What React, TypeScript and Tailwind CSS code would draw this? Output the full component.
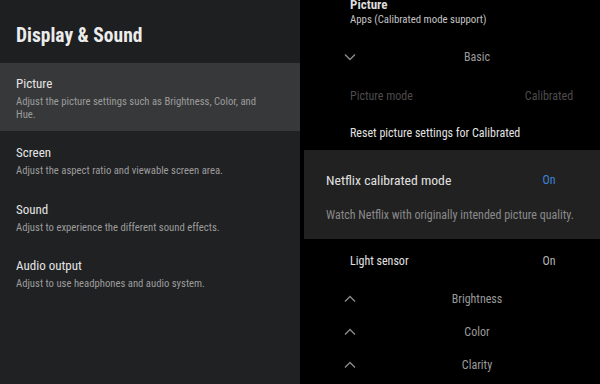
import React from "react"

const font = { fontFamily: "'Roboto Condensed', Roboto, 'Liberation Sans', sans-serif" }

const menu = [
  { title: "Picture", desc: "Adjust the picture settings such as Brightness, Color, and Hue.", active: true },
  { title: "Screen", desc: "Adjust the aspect ratio and viewable screen area." },
  { title: "Sound", desc: "Adjust to experience the different sound effects." },
  { title: "Audio output", desc: "Adjust to use headphones and audio system." },
]

function Chevron({ up }: { up?: boolean }) {
  return (
    <svg width="12" height="8" viewBox="0 0 12 8" fill="none">
      <polyline
        points={up ? "1,6.5 6,1.5 11,6.5" : "1,1.5 6,6.5 11,1.5"}
        stroke="#8a8a8a"
        strokeWidth="1.4"
      />
    </svg>
  )
}

export default function App() {
  return (
    <div className="flex w-[600px] h-[384px] overflow-hidden bg-black" style={font}>
      {/* left menu */}
      <div className="w-[300px] h-full bg-[#202123] flex flex-col">
        <div className="h-[63px] flex items-center pl-4 pt-[9px] bg-[#1e1f20]">
          <h1 className="text-[19.5px] font-bold text-[#ececec] leading-none">Display &amp; Sound</h1>
        </div>
        {menu.map((m) =>
          m.active ? (
            <div key={m.title} className="bg-[#373839] h-[68px] pl-4 pr-8 pt-[13px]">
              <div className="text-[13px] leading-[16px] text-[#e4e4e4]">{m.title}</div>
              <div className="text-[10.7px] leading-[13px] text-[#9c9c9c] mt-[3px]">{m.desc}</div>
            </div>
          ) : (
            <div key={m.title} className="h-[56.5px] pl-4 pt-[14px]">
              <div className="text-[13px] leading-[16px] text-[#e4e4e4]">{m.title}</div>
              <div className="text-[10.7px] leading-[13px] text-[#9c9c9c] mt-[3px]">{m.desc}</div>
            </div>
          )
        )}
      </div>

      {/* right detail */}
      <div className="flex-1 h-full flex flex-col">
        <div className="pl-[50px] mt-[-3px]">
          <div className="text-[13px] leading-[16px] font-bold text-[#dcdcdc]">Picture</div>
          <div className="text-[10.8px] leading-[14px] text-[#c4c4c4]">Apps (Calibrated mode support)</div>
        </div>
        <div className="h-[11px]" />
        <div className="h-[38px] flex items-center pl-[40px] pr-[6px]">
          <div className="w-[20px] flex justify-center"><Chevron /></div>
          <div className="flex-1 text-center text-[12px] text-[#9a9a9a]">Basic</div>
        </div>
        <div className="h-[39px] flex items-center pl-[50px]">
          <div className="flex-1 text-[12px] text-[#4c4c4c]">Picture mode</div>
          <div className="w-[80px] mr-[11px] text-center text-[12px] text-[#4c4c4c]">Calibrated</div>
        </div>
        <div className="h-[35px] flex items-center pl-[50px]">
          <div className="text-[12px] text-[#e2e2e2]">Reset picture settings for Calibrated</div>
        </div>
        <div className="h-[89px] ml-[4px] bg-[#212121] pl-[22px] pt-[22px]">
          <div className="flex items-center h-[16px]">
            <div className="flex-1 text-[13.7px] text-[#e0e0e0]">Netflix calibrated mode</div>
            <div className="w-[80px] mr-[11px] text-center text-[12px] text-[#3f83d6]">On</div>
          </div>
          <div className="mt-[20px] text-[12px] leading-[14px] text-[#8a8a8a]">
            Watch Netflix with originally intended picture quality.
          </div>
        </div>
        <div className="h-[43px] flex items-center pl-[50px]">
          <div className="flex-1 text-[12px] text-[#e2e2e2]">Light sensor</div>
          <div className="w-[80px] mr-[11px] text-center text-[12px] text-[#b4b4b4]">On</div>
        </div>
        {["Brightness", "Color", "Clarity"].map((l) => (
          <div key={l} className="h-[33px] flex items-center pl-[40px] pr-[6px]">
            <div className="w-[20px] flex justify-center"><Chevron up /></div>
            <div className="flex-1 text-center text-[12px] text-[#9a9a9a]">{l}</div>
          </div>
        ))}
      </div>
    </div>
  )
}
